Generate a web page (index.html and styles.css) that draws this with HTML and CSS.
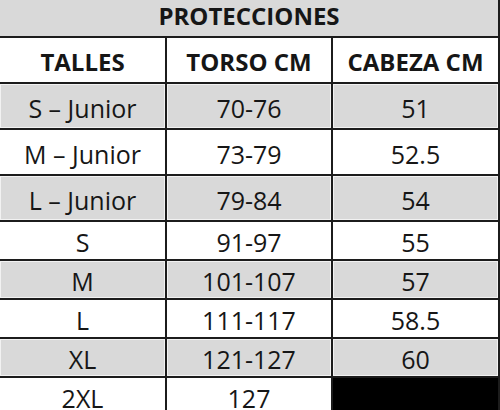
FILE: index.html
```html
<!DOCTYPE html>
<html lang="es">
<head>
<meta charset="utf-8">
<title>Protecciones</title>
<link rel="stylesheet" href="styles.css">
</head>
<body>
<table class="sizes">
  <colgroup><col class="c1"><col class="c2"><col class="c3"></colgroup>
  <tr class="r-title"><th colspan="3" class="title">PROTECCIONES</th></tr>
  <tr class="r-head"><th>TALLES</th><th>TORSO CM</th><th>CABEZA CM</th></tr>
  <tr class="r-big grey"><td>S – Junior</td><td>70-76</td><td>51</td></tr>
  <tr class="r-big"><td>M – Junior</td><td>73-79</td><td>52.5</td></tr>
  <tr class="r-big2 grey"><td>L – Junior</td><td>79-84</td><td>54</td></tr>
  <tr class="r-sm"><td>S</td><td>91-97</td><td>55</td></tr>
  <tr class="r-sm2 grey"><td>M</td><td>101-107</td><td>57</td></tr>
  <tr class="r-sm"><td>L</td><td>111-117</td><td>58.5</td></tr>
  <tr class="r-sm2 grey"><td>XL</td><td>121-127</td><td>60</td></tr>
  <tr class="r-last"><td>2XL</td><td>127</td><td class="black"></td></tr>
</table>
</body>
</html>
```
FILE: styles.css
```css
html, body {
  margin: 0;
  padding: 0;
  background: #ffffff;
  overflow: hidden;
}
.sizes {
  border-collapse: collapse;
  table-layout: fixed;
  width: 499px;
  font-family: "Open Sans", "Liberation Sans", sans-serif;
  color: #161616;
}
.c1 { width: 166px; }
.c2 { width: 166px; }
.c3 { width: 167px; }
.sizes th, .sizes td {
  border: 2px solid #1c1c1c;
  padding: 0;
  text-align: center;
  vertical-align: middle;
  white-space: nowrap;
}
.sizes tr > :first-child { border-left: none; }
.sizes th {
  font-weight: 700;
  font-size: 24px;
}
.sizes td {
  font-size: 25px;
  font-weight: 400;
  padding-top: 3px;
}
.title {
  background: #d9d9d9;
  border-top: none !important;
  line-height: 32px;
  padding-bottom: 4px !important;
}
.r-title { height: 37px; }
.r-head { height: 46px; }
.r-head th { background: #ffffff; padding-top: 2px; }
.r-big { height: 46px; }
.r-big2 { height: 46px; }
.r-sm { height: 39px; }
.r-sm2 { height: 38px; }
.r-last { height: 34px; }
.grey td {
  background: #d9d9d9;
  box-shadow: inset 1px 1px 0 #f2f2f2, inset -1px -1px 0 #f2f2f2;
}
.black { background: #000000; }
```
